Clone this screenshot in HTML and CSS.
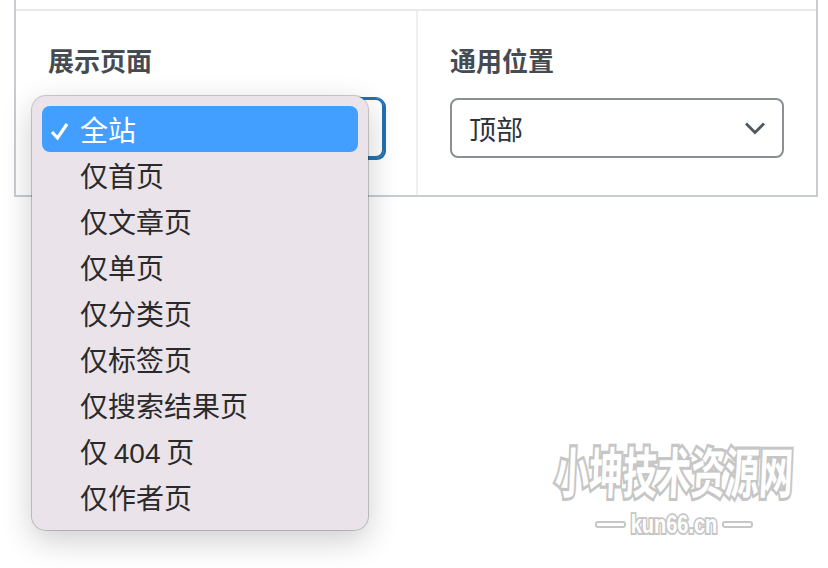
FILE: index.html
```html
<!DOCTYPE html>
<html lang="zh-CN">
<head>
    <meta charset="UTF-8">
    <title>展示页面</title>
    <link rel="stylesheet" href="styles.css">
</head>
<body>
    <div class="panel">
        <div class="panel_top"></div>
        <div class="fields">
            <div class="field">
                <div class="label">展示页面</div>
                <div class="select focus"></div>
            </div>
            <div class="field">
                <div class="label">通用位置</div>
                <div class="select">
                    <span>顶部</span>
                    <svg class="arrow" width="22" height="14" viewBox="0 0 22 14"><path d="M2 2.5 L11 11.5 L20 2.5" fill="none" stroke="#50575e" stroke-width="2.8"/></svg>
                </div>
            </div>
        </div>
    </div>

    <!-- 下拉菜单 -->
    <div class="menu">
        <div class="item active">
            <svg class="check" width="20" height="20" viewBox="0 0 20 20"><path d="M2 11 L7.5 17 L17 3" fill="none" stroke="#fff" stroke-width="3.2"/></svg>
            全站
        </div>
        <div class="item">仅首页</div>
        <div class="item">仅文章页</div>
        <div class="item">仅单页</div>
        <div class="item">仅分类页</div>
        <div class="item">仅标签页</div>
        <div class="item">仅搜索结果页</div>
        <div class="item tight">仅 404 页</div>
        <div class="item">仅作者页</div>
    </div>

    <!-- 水印 -->
    <div class="mark">
        <div class="mark_title">小坤技术资源网</div>
        <div class="mark_url"><i></i><span>kun66.cn</span><i></i></div>
    </div>
</body>
</html>
```

FILE: styles.css
```css
html, body{
    margin: 0;
    height: 568px;
    overflow: hidden;
    background-color: #fff;
    font-family: "Liberation Sans", "Noto Sans CJK SC", sans-serif;
}
.panel{
    width: 800px;
    margin-left: 14px;
    border: 2px solid #c9ccd0;
    border-top: none;
    background-color: #fff;
}
.panel_top{
    height: 9px;
    border-bottom: 2px solid #e8e9ec;
}
.fields{
    display: flex;
    height: 184px;
}
.field{
    flex: 1;
    padding: 32px 32px 0;
}
.field:first-child{
    flex: none;
    width: 336px;
    border-right: 2px solid #eeeff1;
}
.label{
    font-size: 26px;
    line-height: 38px;
    font-weight: 700;
    color: #454b52;
    margin-bottom: 17px;
}
.select{
    height: 56px;
    border: 2px solid #8c8f94;
    border-radius: 8px;
    padding: 0 16px 0 17px;
    display: flex;
    align-items: center;
    justify-content: space-between;
    font-size: 27px;
    color: #2c3338;
}
.select.focus{
    border-color: #2271b1;
    box-shadow: 0 0 0 1px #2271b1, 1px 1px 0 1px #2271b1;
}

.menu{
    position: absolute;
    left: 32px;
    top: 96px;
    width: 316px;
    padding: 10px;
    background-color: #eae4ea;
    border-radius: 14px;
    box-shadow: 0 0 0 1px rgba(0, 0, 0, 0.2), 0 10px 32px rgba(0, 0, 0, 0.2);
}
.item{
    position: relative;
    height: 46px;
    line-height: 51px;
    padding-left: 38px;
    font-size: 28px;
    color: #2a2a2a;
    border-radius: 8px;
}
.item.tight{
    word-spacing: -2px;
}
.item.active{
    background-color: #429eff;
    color: #fff;
}
.check{
    position: absolute;
    left: 8px;
    top: 15px;
}

.mark{
    position: absolute;
    left: 552px;
    top: 446px;
    width: 244px;
    text-align: center;
    color: #fff;
    font-weight: 700;
    -webkit-text-stroke: 4px #c6c6c6;
    paint-order: stroke fill;
}
.mark_title{
    font-size: 34px;
    line-height: 56px;
    white-space: nowrap;
    transform: scaleY(1.6) skewX(-4deg);
}
.mark_url{
    display: flex;
    justify-content: center;
    align-items: center;
    gap: 5px;
    font-size: 20px;
    line-height: 30px;
    margin-top: 7px;
    -webkit-text-stroke: 3px #c6c6c6;
}
.mark_url span{
    transform: scaleY(1.25);
}
.mark_url i{
    width: 27px;
    height: 3px;
    background-color: #fff;
    border: 2px solid #c6c6c6;
    border-radius: 3px;
}
```
